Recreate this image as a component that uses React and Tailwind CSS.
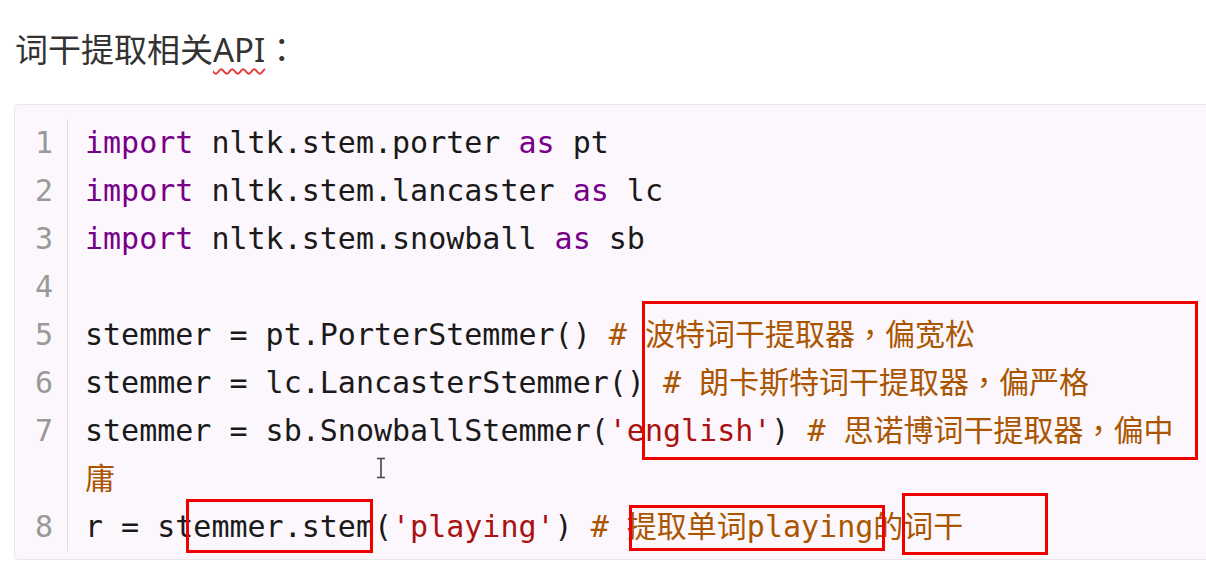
import React from "react";

const K = ({ children }) => <span className="text-[#770088]">{children}</span>;
const S = ({ children }) => <span className="text-[#aa1111]">{children}</span>;
const C = ({ children }) => <span className="text-[#aa5500]">{children}</span>;
const P = ({ children }) => (
  <span className="leading-none" style={{ fontFamily: '"Noto Sans CJK TC", sans-serif' }}>{children}</span>
);

const lines = [
  { n: 1, c: <><K>import</K> nltk.stem.porter <K>as</K> pt</> },
  { n: 2, c: <><K>import</K> nltk.stem.lancaster <K>as</K> lc</> },
  { n: 3, c: <><K>import</K> nltk.stem.snowball <K>as</K> sb</> },
  { n: 4, c: <>{"\u00a0"}</> },
  { n: 5, c: <>stemmer = pt.PorterStemmer() <C># 波特词干提取器<P>，</P>偏宽松</C></> },
  { n: 6, c: <>stemmer = lc.LancasterStemmer() <C># 朗卡斯特词干提取器<P>，</P>偏严格</C></> },
  { n: 7, c: <>stemmer = sb.SnowballStemmer(<S>'english'</S>) <C># 思诺博词干提取器<P>，</P>偏中庸</C></> },
  { n: 8, c: <>r = stemmer.stem(<S>'playing'</S>) <C># 提取单词playing的词干</C></> },
];

export default function App() {
  return (
    <div className="relative w-[1206px] h-[564px] bg-white overflow-hidden">
      <h1
        className="h-[70px] pl-[15px] pt-[30px] text-[33px] leading-[40px] font-normal text-[#333333]"
        style={{ fontFamily: '"Noto Sans", "Noto Sans CJK SC", sans-serif' }}
      >
        词干提取相关
        <span className="underline decoration-wavy decoration-[#e53935] decoration-[1.5px] underline-offset-[6px]">API</span>
        <P>：</P>
      </h1>

      <div className="mt-[34px] ml-[14px] w-[1220px] border border-[#ebe6eb] rounded-[4px] bg-[#fcf7fc] pt-[14px] pb-[8px]">
        {lines.map((l) => (
          <div
            key={l.n}
            className="flex text-[30px] leading-[48px] text-[#1a1a1a]"
            style={{ fontFamily: '"DejaVu Sans Mono", "Noto Sans CJK SC", monospace' }}
          >
            <div className="w-[53px] shrink-0 border-r border-[#dddddd] pr-[14px] text-right text-[#999999]">
              {l.n}
            </div>
            <div className="w-[1128px] pl-[17px] whitespace-pre-wrap">{l.c}</div>
          </div>
        ))}
      </div>

      {/* annotation boxes */}
      <div className="absolute left-[642px] top-[301px] w-[556px] h-[159px] border-[3px] border-[#f20000]" />
      <div className="absolute left-[186px] top-[499px] w-[187px] h-[54px] border-[3px] border-[#f20000]" />
      <div className="absolute left-[629px] top-[505px] w-[256px] h-[46px] border-[3px] border-[#f20000]" />
      <div className="absolute left-[902px] top-[493px] w-[146px] h-[62px] border-[3px] border-[#f20000]" />

      {/* text cursor */}
      <svg className="absolute left-[375px] top-[457px]" width="12" height="22" viewBox="0 0 12 22">
        <path d="M2 1.5h8M6 1.5v19M2 20.5h8" stroke="#444" strokeWidth="1.6" fill="none" />
      </svg>
    </div>
  );
}
